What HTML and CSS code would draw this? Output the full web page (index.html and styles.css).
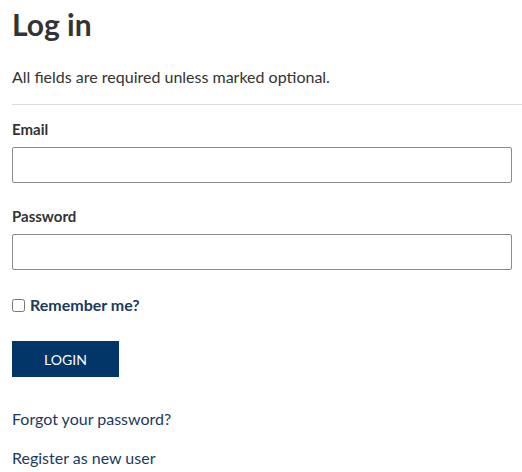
FILE: index.html
```html
<!DOCTYPE html>
<html>
<head>
<meta charset="utf-8">
<link rel="stylesheet" href="styles.css">
</head>
<body>
<main class="page">
  <h1 class="title">Log in</h1>
  <p class="intro">All fields are required unless marked optional.</p>
  <hr class="rule">
  <form class="form">
    <div class="field">
      <label class="label" for="email">Email</label>
      <input class="input" id="email" type="text">
    </div>
    <div class="field">
      <label class="label" for="pw">Password</label>
      <input class="input" id="pw" type="password">
    </div>
    <div class="check">
      <input class="checkbox" id="rem" type="checkbox">
      <label class="check-label" for="rem">Remember me?</label>
    </div>
    <button class="btn" type="button">LOGIN</button>
  </form>
  <p class="link-row"><a class="link" href="#">Forgot your password?</a></p>
  <p class="link-row"><a class="link" href="#">Register as new user</a></p>
</main>
</body>
</html>
```

FILE: styles.css
```css
html, body {
  margin: 0;
  padding: 0;
  background: #fff;
}
body {
  font-family: Lato, "Liberation Sans", sans-serif;
  font-size: 16px;
  color: #333;
}
.page {
  padding: 0 0 0 12px;
}
.title {
  margin: 0;
  padding-top: 4px;
  font-size: 30px;
  line-height: 40px;
  font-weight: 700;
  color: #333;
}
.intro {
  margin: 22px 0 0;
  line-height: 22px;
}
.rule {
  margin: 16px 0 0;
  border: 0;
  border-top: 1px solid #ddd;
  height: 0;
}
.form {
  display: flex;
  flex-direction: column;
  align-items: flex-start;
}
.field {
  display: flex;
  flex-direction: column;
  width: 500px;
}
.label {
  font-size: 15px;
  font-weight: 700;
  line-height: 22px;
  margin-top: 13px;
  margin-bottom: 7px;
}
.field + .field .label {
  margin-top: 22px;
}
.input {
  box-sizing: border-box;
  width: 500px;
  height: 36px;
  margin: 0;
  border: 1px solid #8a8a8a;
  border-radius: 2px;
  padding: 4px 8px;
  font: inherit;
}
.check {
  display: flex;
  align-items: center;
  gap: 5px;
  margin-top: 24px;
}
.checkbox {
  margin: 0;
  width: 13px;
  height: 13px;
}
.check-label {
  font-weight: 700;
  color: #1b3a5c;
  line-height: 22px;
}
.btn {
  margin-top: 25px;
  width: 107px;
  height: 36px;
  border: 0;
  background: #033668;
  color: #fff;
  font: inherit;
  font-size: 14px;
  padding: 0;
}
.link-row {
  margin: 31px 0 0;
  line-height: 22px;
}
.link-row + .link-row {
  margin-top: 17px;
}
.link {
  color: #1b3a5c;
  text-decoration: none;
}
```
